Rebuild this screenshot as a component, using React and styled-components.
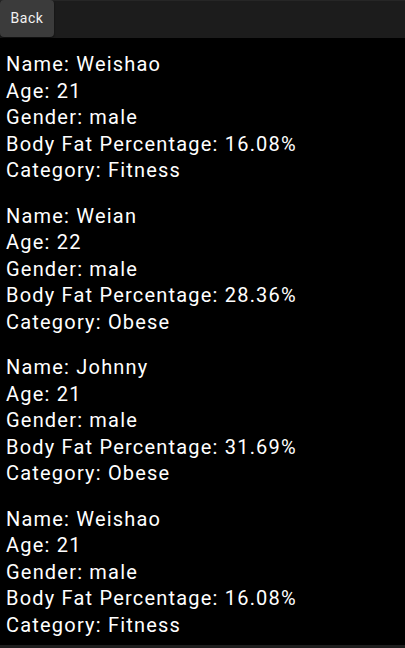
import React from "react";
import styled, { createGlobalStyle } from "styled-components";

const Global = createGlobalStyle`
  html, body { margin: 0; padding: 0; background: #000; }
  body { font-family: Roboto, "Noto Sans", sans-serif; }
`;

const Page = styled.div`
  width: 405px;
  height: 648px;
  background: #000;
  display: flex;
  flex-direction: column;
  overflow: hidden;
`;

const Toolbar = styled.div`
  height: 38px;
  flex: none;
  background: #1c1c1c;
  border-top: 1px solid #262626;
  box-sizing: border-box;
  display: flex;
  align-items: stretch;
`;

const BackButton = styled.button`
  width: 54px;
  height: 37px;
  margin-top: -1px;
  border: none;
  border-radius: 4px;
  background: #3b3b3b;
  color: #f2f2f2;
  font-family: Roboto, sans-serif;
  font-size: 14px;
  letter-spacing: 0.5px;
  padding: 0 0 2px;
  box-shadow: 0 1px 2px rgba(0,0,0,0.6);
`;

const List = styled.div`
  flex: 1;
  padding: 13px 6px 0;
  display: flex;
  flex-direction: column;
  gap: 19px;
  overflow: hidden;
`;

const Record = styled.div`
  display: flex;
  flex-direction: column;
`;

const Line = styled.div`
  color: #fff;
  font-size: 20px;
  letter-spacing: 1.2px;
  line-height: 26.5px;
  white-space: nowrap;
`;

const Footer = styled.div`
  height: 3px;
  flex: none;
  background: #1e1e1e;
`;

const people = [
  { name: "Weishao", age: 21, gender: "male", bf: "16.08%", cat: "Fitness" },
  { name: "Weian", age: 22, gender: "male", bf: "28.36%", cat: "Obese" },
  { name: "Johnny", age: 21, gender: "male", bf: "31.69%", cat: "Obese" },
  { name: "Weishao", age: 21, gender: "male", bf: "16.08%", cat: "Fitness" },
];

export default function App() {
  return (
    <Page>
      <Global />
      <Toolbar>
        <BackButton>Back</BackButton>
      </Toolbar>
      <List>
        {people.map((p, i) => (
          <Record key={i}>
            <Line>Name: {p.name}</Line>
            <Line>Age: {p.age}</Line>
            <Line>Gender: {p.gender}</Line>
            <Line>Body Fat Percentage: {p.bf}</Line>
            <Line>Category: {p.cat}</Line>
          </Record>
        ))}
      </List>
      <Footer />
    </Page>
  );
}
